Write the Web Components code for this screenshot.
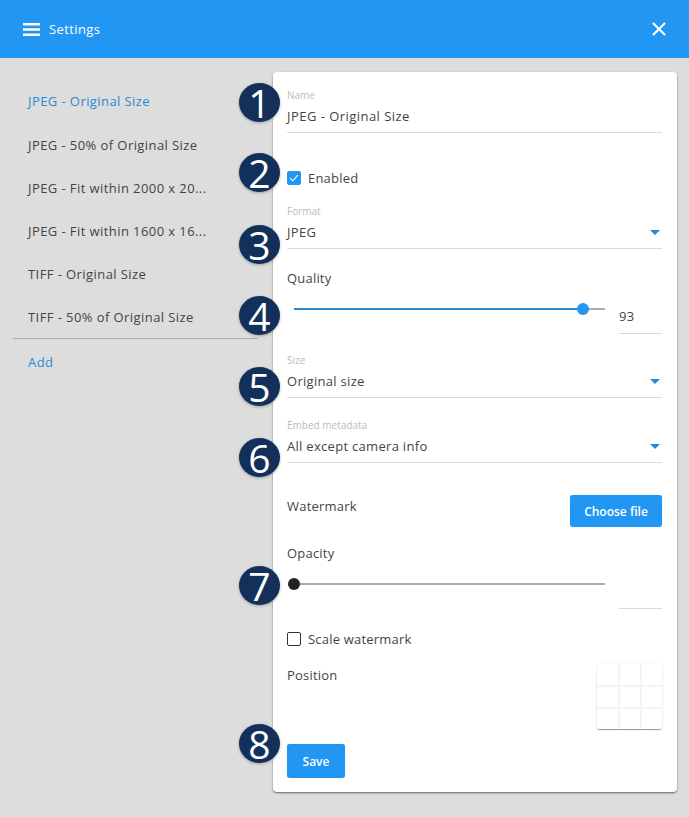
<!DOCTYPE html>
<html>
<head>
<meta charset="utf-8">
<style>
  html, body { margin: 0; height: 100%; }
  body {
    background: #ddd;
    color: #444;
    font: 13px "Open Sans", sans-serif;
    overflow: hidden;
  }
  .page { display: flex; align-items: flex-start; }
</style>
</head>
<body>
<app-header>Settings</app-header>
<div class="page">
  <side-nav>
    <nav-item active>JPEG - Original Size</nav-item>
    <nav-item>JPEG - 50% of Original Size</nav-item>
    <nav-item>JPEG - Fit within 2000 x 20...</nav-item>
    <nav-item>JPEG - Fit within 1600 x 16...</nav-item>
    <nav-item>TIFF - Original Size</nav-item>
    <nav-item>TIFF - 50% of Original Size</nav-item>
    <nav-item slot="after" add>Add</nav-item>
  </side-nav>
  <settings-card>
    <step-badge n="1" style="--y:102px"></step-badge>
    <step-badge n="2" style="--y:172px"></step-badge>
    <step-badge n="3" style="--y:244px"></step-badge>
    <step-badge n="4" style="--y:315px"></step-badge>
    <step-badge n="5" style="--y:386px"></step-badge>
    <step-badge n="6" style="--y:457px"></step-badge>
    <step-badge n="7" style="--y:585px"></step-badge>
    <step-badge n="8" style="--y:743px"></step-badge>

    <text-field label="Name" value="JPEG - Original Size" style="--value-spacing:.46px"></text-field>
    <check-row checked style="margin-top:35px">Enabled</check-row>
    <text-field label="Format" value="JPEG" select style="margin-top:16px"></text-field>
    <plain-label style="margin-top:22px">Quality</plain-label>
    <slider-row value="93" percent="93" style="margin-top:11px"></slider-row>
    <text-field label="Size" value="Original size" select style="margin-top:19px"></text-field>
    <text-field label="Embed metadata" value="All except camera info" select style="margin-top:20px"></text-field>
    <split-row style="margin-top:32px">
      <plain-label>Watermark</plain-label>
      <blue-button slot="end" wide>Choose file</blue-button>
    </split-row>
    <plain-label style="margin-top:19px">Opacity</plain-label>
    <slider-row percent="0" off style="margin-top:11px"></slider-row>
    <check-row style="margin-top:20px">Scale watermark</check-row>
    <split-row style="margin-top:15px">
      <plain-label>Position</plain-label>
      <position-grid slot="end"></position-grid>
    </split-row>
    <blue-button style="margin-top:15px">Save</blue-button>
  </settings-card>
</div>

<script>
(global => {
  'use strict';

  const define = (name, html, setup) => {
    customElements.define(name, class extends HTMLElement {
      constructor() {
        super();
        this.attachShadow({ mode: 'open' }).innerHTML = html;
      }
      connectedCallback() {
        if (setup) setup(this, this.shadowRoot);
      }
    });
  };

  define('app-header', `
  <style>
  :host {
    display: flex;
    align-items: center;
    height: 58px;
    box-sizing: border-box;
    padding: 0 23px 0 23px;
    background: #2196f3;
    color: #fff;
    font-size: 13px;
    letter-spacing: .4px;
  }
  .menu { width: 17px; height: 13px; margin-right: 9px; }
  .title { flex: 1; }
  .close { width: 14px; height: 14px; margin-top: -1px; }
  svg { display: block; }
  </style>
  <svg class="menu" viewBox="0 0 17 13"><path d="M0 1.25h17M0 6.5h17M0 11.75h17" stroke="#fff" stroke-width="2.4"/></svg>
  <span class="title"><slot></slot></span>
  <svg class="close" viewBox="0 0 14 14"><path d="M1 1l12 12M13 1L1 13" stroke="#fff" stroke-width="2.2"/></svg>
  `);

  define('side-nav', `
  <style>
  :host {
    display: block;
    width: 273px;
    flex: none;
    box-sizing: border-box;
    padding: 22px 15px 0 13px;
  }
  .line { border-top: 1px solid #aaa; }
  </style>
  <slot></slot>
  <div class="line"></div>
  <slot name="after"></slot>
  `);

  define('nav-item', `
  <style>
  :host {
    display: block;
    height: 43px;
    line-height: 44px;
    padding-left: 15px;
    white-space: nowrap;
    color: #444;
    letter-spacing: .42px;
  }
  :host([active]) { color: #2b8ad6; line-height: 43px; }
  :host([add]) { color: #2b8ad6; height: 46px; line-height: 46px; }
  </style>
  <slot></slot>
  `);

  define('settings-card', `
  <style>
  :host {
    display: block;
    position: relative;
    width: 404px;
    height: 720px;
    margin-top: 14px;
    box-sizing: border-box;
    padding: 16px 15px 14px 14px;
    background: #fff;
    border-radius: 4px;
    box-shadow: 0 1px 2px rgba(0,0,0,.55);
  }
  </style>
  <slot></slot>
  `);

  define('step-badge', `
  <style>
  :host {
    position: absolute;
    left: -34px;
    top: calc(var(--y) - 72px - 19.5px);
    width: 41px;
    height: 39px;
    border-radius: 50%;
    background: #12305a;
    color: #fff;
    font: 400 39px/39px "Open Sans", sans-serif;
    text-align: center;
    box-shadow: 0 1px 3px rgba(0,0,0,.3);
  }
  </style>
  <span></span>
  `, (el, root) => {
    root.querySelector('span').textContent = el.getAttribute('n');
  });

  define('text-field', `
  <style>
  :host {
    display: block;
    position: relative;
    height: 45px;
    box-sizing: border-box;
    border-bottom: 1px solid #d3dde5;
  }
  .label { font-size: 10px; line-height: 14px; color: #bbb; }
  .value { font-size: 13px; line-height: 18px; margin-top: 5px; color: #444; letter-spacing: var(--value-spacing, .3px); }
  svg { position: absolute; right: 2px; bottom: 13px; width: 10px; height: 5px; display: none; }
  :host([select]) svg { display: block; }
  </style>
  <div class="label"></div>
  <div class="value"></div>
  <svg viewBox="0 0 10 5"><path d="M0 0h10L5 5z" fill="#2b85d0"/></svg>
  `, (el, root) => {
    root.querySelector('.label').textContent = el.getAttribute('label');
    root.querySelector('.value').textContent = el.getAttribute('value');
  });

  define('check-row', `
  <style>
  :host {
    display: flex;
    align-items: center;
    height: 20px;
    font-size: 13px;
    color: #444;
    letter-spacing: .2px;
  }
  .box {
    width: 14px;
    height: 14px;
    box-sizing: border-box;
    border: 1px solid #333;
    border-radius: 2px;
    margin-right: 7px;
  }
  .box svg { display: none; }
  :host([checked]) .box { background: #2196f3; border-color: #2196f3; }
  :host([checked]) .box svg { display: block; margin: -1px; width: 14px; height: 14px; }
  </style>
  <div class="box"><svg viewBox="0 0 14 14"><path d="M3.2 7.2l2.6 2.6 5-5.6" fill="none" stroke="#fff" stroke-width="1.1"/></svg></div>
  <slot></slot>
  `);

  define('plain-label', `
  <style>
  :host { display: block; line-height: 14px; font-size: 13px; color: #444; letter-spacing: .2px; }
  </style>
  <slot></slot>
  `);

  define('slider-row', `
  <style>
  :host {
    display: flex;
    position: relative;
    height: 38px;
    justify-content: flex-end;
  }
  .track {
    position: absolute;
    left: 7px;
    top: 12px;
    width: 311px;
    height: 2px;
    background: #aaa;
  }
  .fill { height: 100%; background: #2b85c9; }
  .thumb {
    position: absolute;
    top: -5px;
    width: 12px;
    height: 12px;
    margin-left: -6px;
    border-radius: 50%;
    background: #2196f3;
  }
  :host([off]) .thumb { background: #222; }
  .num {
    width: 43px;
    height: 38px;
    box-sizing: border-box;
    padding-top: 11px;
    line-height: 18px;
    font-size: 13px;
    border-bottom: 1px solid #d3dde5;
    color: #444;
    letter-spacing: .3px;
  }
  </style>
  <div class="track"><div class="fill"></div><div class="thumb"></div></div>
  <div class="num"></div>
  `, (el, root) => {
    const pos = Number(el.getAttribute('percent')) * 3.11;
    root.querySelector('.fill').style.width = pos + 'px';
    root.querySelector('.thumb').style.left = pos + 'px';
    root.querySelector('.num').textContent = el.getAttribute('value') || '';
  });

  define('split-row', `
  <style>
  :host { display: flex; justify-content: space-between; align-items: flex-start; }
  .start { padding-top: 4px; }
  </style>
  <div class="start"><slot></slot></div>
  <slot name="end"></slot>
  `);

  define('blue-button', `
  <style>
  :host {
    display: block;
    width: 58px;
    height: 34px;
    line-height: 36px;
    text-align: center;
    background: #2196f3;
    color: #fff;
    border-radius: 3px;
    font-size: 12px;
    font-weight: 600;
    box-shadow: 0 0 1px rgba(0,0,0,.3);
  }
  :host([wide]) { width: 92px; height: 32px; line-height: 33px; }
  </style>
  <slot></slot>
  `);

  define('position-grid', `
  <style>
  :host {
    display: grid;
    grid-template-columns: 21px 20px 20px;
    grid-template-rows: 21px 20px 20px;
    gap: 2px;
    width: 65px;
    height: 65px;
    background: #f4f4f4;
    border-radius: 3px;
    overflow: hidden;
    box-shadow: 0 1px 1px rgba(0,0,0,.4), 0 0 3px rgba(0,0,0,.06);
  }
  div { background: #fff; }
  </style>
  <div></div><div></div><div></div>
  <div></div><div></div><div></div>
  <div></div><div></div><div></div>
  `);
})(this);
</script>
</body>
</html>
